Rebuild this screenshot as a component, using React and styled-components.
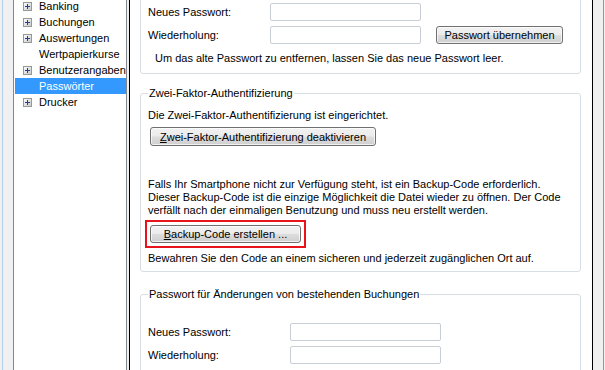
import React from 'react';
import styled, { createGlobalStyle } from 'styled-components';

const GlobalStyle = createGlobalStyle`
  html, body {
    margin: 0;
    padding: 0;
    background: #f0f0f0;
  }
  body {
    font-family: "Liberation Sans", Arial, sans-serif;
    font-size: 11px;
    color: #000;
  }
`;

const Window = styled.div`
  display: flex;
  height: 370px;
  overflow: hidden;
  margin: 0 1px 0 2px;
  padding: 0 10px;
  border-left: 1px solid #b3cfe9;
  border-right: 1px solid #4ea9ee;
  background: #f0f0f0;
  box-sizing: border-box;
`;

const Tree = styled.div`
  width: 114px;
  flex: none;
  box-sizing: border-box;
  border-left: 1px solid #828790;
  border-right: 1px solid #828790;
  background: #fff;
  margin-right: 2px;
`;

const TreeList = styled.ul`
  list-style: none;
  margin: -2px 0 0 1px;
  padding: 0;
`;

const TreeRow = styled.li`
  display: flex;
  align-items: center;
  height: 16px;
  padding-left: 8px;
  background: ${(p) => (p.$selected ? '#3399ff' : 'transparent')};
  color: ${(p) => (p.$selected ? '#fff' : '#000')};
  white-space: nowrap;
`;

const Expander = styled.span`
  display: inline-flex;
  width: 9px;
  height: 9px;
  margin-right: 7px;
  flex: none;
`;

const Content = styled.div`
  flex: 1;
  box-sizing: border-box;
  border-left: 1px solid #000;
  border-right: 1px solid #000;
  background: #fff;
  display: flex;
  flex-direction: column;
`;

const Group = styled.fieldset`
  margin: ${(p) => p.$top}px 11px 0 10px;
  padding: ${(p) => p.$padTop}px 7px ${(p) => p.$padBottom}px 7px;
  border: 1px solid #d5dfe5;
  border-radius: 3px;
  min-inline-size: 0;
  flex: none;
`;

const Legend = styled.legend`
  padding: 0 1px;
  line-height: 13px;
`;

const FormGrid = styled.div`
  display: grid;
  grid-template-columns: ${(p) => p.$labelWidth}px 151px auto;
  column-gap: 15px;
  row-gap: 5px;
  align-items: center;
`;

const Label = styled.label`
  line-height: 13px;
  white-space: nowrap;
  margin-right: -15px;
`;

const Input = styled.input`
  box-sizing: border-box;
  width: 151px;
  height: 18px;
  border: 1px solid #c9ced6;
  border-radius: 2px;
  background: #fff;
  padding: 0 3px;
  font: inherit;
  outline: none;
`;

const Button = styled.button`
  box-sizing: border-box;
  width: ${(p) => p.$w}px;
  height: ${(p) => p.$h || 18}px;
  margin-left: ${(p) => p.$ml || 0}px;
  padding: 0;
  border: 1px solid #707070;
  border-radius: 3px;
  background: linear-gradient(#f2f2f2 0%, #ebebeb 48%, #dddddd 52%, #cfcfcf 100%);
  box-shadow: inset 0 0 0 1px rgba(255, 255, 255, 0.7);
  font: inherit;
  color: #000;
  white-space: nowrap;
  display: flex;
  align-items: center;
  justify-content: center;
`;

const Text = styled.div`
  line-height: 13px;
  white-space: nowrap;
  margin-top: ${(p) => p.$mt || 0}px;
  padding-left: ${(p) => p.$indent || 0}px;
`;

const Highlight = styled.div`
  align-self: flex-start;
  display: inline-flex;
  margin: 3px 0 0 -3px;
  padding: 3px;
  border: 2px solid #e8141b;
`;

const GroupBody = styled.div`
  display: flex;
  flex-direction: column;
  align-items: flex-start;
`;

function PlusBox() {
  return (
    <svg width="9" height="9" viewBox="0 0 9 9">
      <defs>
        <linearGradient id="pb" x1="0" y1="0" x2="1" y2="1">
          <stop offset="0" stopColor="#ffffff" />
          <stop offset="1" stopColor="#c6c6c6" />
        </linearGradient>
      </defs>
      <rect x="0.5" y="0.5" width="8" height="8" fill="url(#pb)" stroke="#919b9c" />
      <path d="M2 4.5h5M4.5 2v5" stroke="#243f8f" strokeWidth="1" />
    </svg>
  );
}

const treeItems = [
  { label: 'Banking', children: true },
  { label: 'Buchungen', children: true },
  { label: 'Auswertungen', children: true },
  { label: 'Wertpapierkurse' },
  { label: 'Benutzerangaben', children: true },
  { label: 'Passwörter', selected: true },
  { label: 'Drucker', children: true },
];

export default function App() {
  return (
    <>
      <GlobalStyle />
      <Window>
        <Tree>
          <TreeList>
            {treeItems.map((item) => (
              <TreeRow key={item.label} $selected={item.selected}>
                <Expander>{item.children && <PlusBox />}</Expander>
                {item.label}
              </TreeRow>
            ))}
          </TreeList>
        </Tree>

        <Content>
          <Group $top={-8} $padTop={10} $padBottom={8}>
            <FormGrid $labelWidth={107}>
              <Label>Neues Passwort:</Label>
              <Input type="password" />
              <span />
              <Label>Wiederholung:</Label>
              <Input type="password" />
              <Button type="button" $w={127}>Passwort übernehmen</Button>
            </FormGrid>
            <Text $mt={8} $indent={7}>
              Um das alte Passwort zu entfernen, lassen Sie das neue Passwort leer.
            </Text>
          </Group>

          <Group $top={13} $padTop={9} $padBottom={6}>
            <Legend>Zwei-Faktor-Authentifizierung</Legend>
            <GroupBody>
              <Text>Die Zwei-Faktor-Authentifizierung ist eingerichtet.</Text>
              <Button type="button" $w={226} $h={19} $ml={2} style={{ marginTop: 5 }}>
                <span><u>Z</u>wei-Faktor-Authentifizierung deaktivieren</span>
              </Button>
              <Text $mt={32}>
                Falls Ihr Smartphone nicht zur Verfügung steht, ist ein Backup-Code erforderlich.
                <br />
                Dieser Backup-Code ist die einzige Möglichkeit die Datei wieder zu öffnen. Der Code
                <br />
                verfällt nach der einmaligen Benutzung und muss neu erstellt werden.
              </Text>
              <Highlight>
                <Button type="button" $w={151}>
                  <span><u>B</u>ackup-Code erstellen ...</span>
                </Button>
              </Highlight>
              <Text $mt={4}>
                Bewahren Sie den Code an einem sicheren und jederzeit zugänglichen Ort auf.
              </Text>
            </GroupBody>
          </Group>

          <Group $top={16} $padTop={22} $padBottom={8}>
            <Legend>Passwort für Änderungen von bestehenden Buchungen</Legend>
            <FormGrid $labelWidth={127}>
              <Label>Neues Passwort:</Label>
              <Input type="password" />
              <span />
              <Label>Wiederholung:</Label>
              <Input type="password" />
              <span />
            </FormGrid>
          </Group>
        </Content>
      </Window>
    </>
  );
}
